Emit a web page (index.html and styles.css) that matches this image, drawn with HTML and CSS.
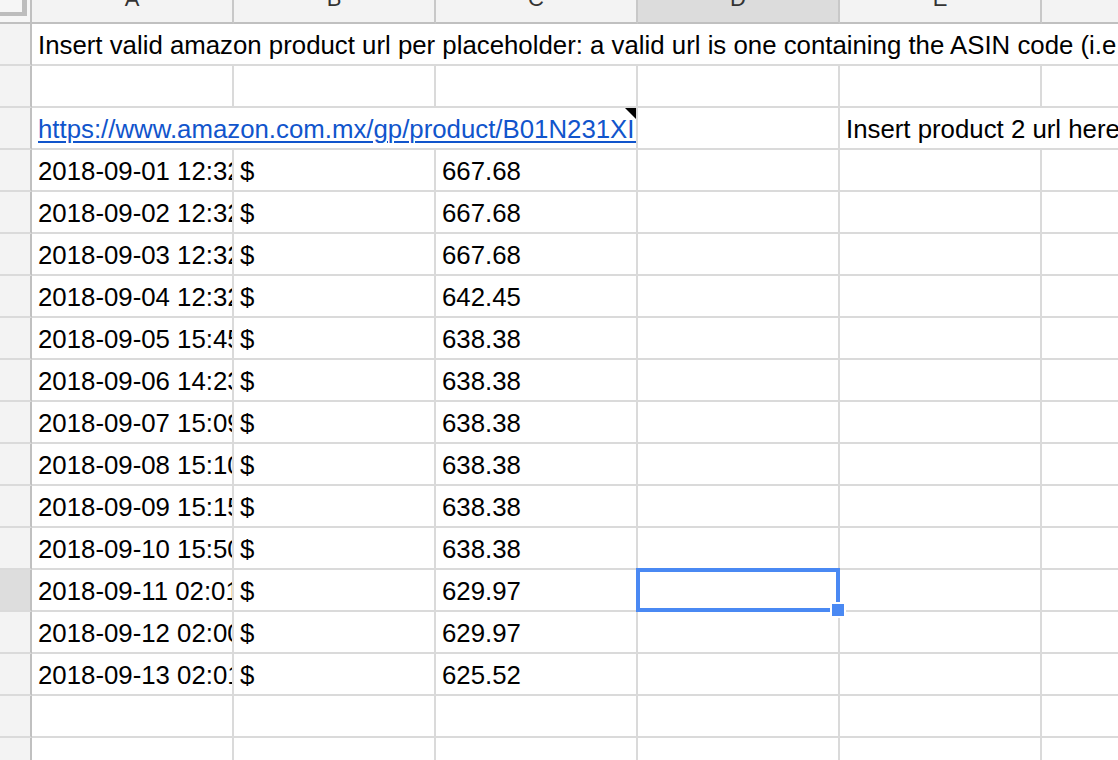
FILE: index.html
```html
<!DOCTYPE html>
<html>
<head>
<meta charset="utf-8">
<link rel="stylesheet" href="styles.css">
</head>
<body>
<div class="sheet">
  <div class="row hdr">
    <div class="rh corner"><div class="freeze"></div></div>
    <div class="ch"><span>A</span></div>
    <div class="ch"><span>B</span></div>
    <div class="ch"><span>C</span></div>
    <div class="ch on"><span>D</span></div>
    <div class="ch"><span>E</span></div>
    <div class="ch"><span>F</span></div>
  </div>

  <div class="row">
    <div class="rh"></div>
    <div class="cell nob spill">Insert valid amazon product url per placeholder: a valid url is one containing the ASIN code (i.e. B01N231XIL)<i class="note"></i></div>
    <div class="cell nob"></div>
    <div class="cell nob"></div>
    <div class="cell nob"></div>
    <div class="cell nob"></div>
    <div class="cell nob"></div>
  </div>

  <div class="row">
    <div class="rh"></div>
    <div class="cell"></div><div class="cell"></div><div class="cell"></div><div class="cell"></div><div class="cell"></div><div class="cell"></div>
  </div>

  <div class="row">
    <div class="rh"></div>
    <div class="cell span3"><a class="link" href="#">https://www.amazon.com.mx/gp/product/B01N231XIL/ref=ox_sc_act_title_1</a><i class="note"></i></div>
    <div class="cell"></div>
    <div class="cell nob spill">Insert product 2 url here</div>
    <div class="cell"></div>
  </div>

  <div class="row"><div class="rh"></div><div class="cell date">2018-09-01 12:32:05</div><div class="cell">$</div><div class="cell">667.68</div><div class="cell"></div><div class="cell"></div><div class="cell"></div></div>
  <div class="row"><div class="rh"></div><div class="cell date">2018-09-02 12:32:11</div><div class="cell">$</div><div class="cell">667.68</div><div class="cell"></div><div class="cell"></div><div class="cell"></div></div>
  <div class="row"><div class="rh"></div><div class="cell date">2018-09-03 12:32:08</div><div class="cell">$</div><div class="cell">667.68</div><div class="cell"></div><div class="cell"></div><div class="cell"></div></div>
  <div class="row"><div class="rh"></div><div class="cell date">2018-09-04 12:32:14</div><div class="cell">$</div><div class="cell">642.45</div><div class="cell"></div><div class="cell"></div><div class="cell"></div></div>
  <div class="row"><div class="rh"></div><div class="cell date">2018-09-05 15:45:02</div><div class="cell">$</div><div class="cell">638.38</div><div class="cell"></div><div class="cell"></div><div class="cell"></div></div>
  <div class="row"><div class="rh"></div><div class="cell date">2018-09-06 14:23:40</div><div class="cell">$</div><div class="cell">638.38</div><div class="cell"></div><div class="cell"></div><div class="cell"></div></div>
  <div class="row"><div class="rh"></div><div class="cell date">2018-09-07 15:09:31</div><div class="cell">$</div><div class="cell">638.38</div><div class="cell"></div><div class="cell"></div><div class="cell"></div></div>
  <div class="row"><div class="rh"></div><div class="cell date">2018-09-08 15:10:22</div><div class="cell">$</div><div class="cell">638.38</div><div class="cell"></div><div class="cell"></div><div class="cell"></div></div>
  <div class="row"><div class="rh"></div><div class="cell date">2018-09-09 15:15:47</div><div class="cell">$</div><div class="cell">638.38</div><div class="cell"></div><div class="cell"></div><div class="cell"></div></div>
  <div class="row"><div class="rh"></div><div class="cell date">2018-09-10 15:50:13</div><div class="cell">$</div><div class="cell">638.38</div><div class="cell"></div><div class="cell"></div><div class="cell"></div></div>
  <div class="row"><div class="rh on"></div><div class="cell date">2018-09-11 02:01:09</div><div class="cell">$</div><div class="cell">629.97</div><div class="cell selected"><div class="selbox"><i class="handle"></i></div></div><div class="cell"></div><div class="cell"></div></div>
  <div class="row"><div class="rh"></div><div class="cell date">2018-09-12 02:00:58</div><div class="cell">$</div><div class="cell">629.97</div><div class="cell"></div><div class="cell"></div><div class="cell"></div></div>
  <div class="row"><div class="rh"></div><div class="cell date">2018-09-13 02:01:12</div><div class="cell">$</div><div class="cell">625.52</div><div class="cell"></div><div class="cell"></div><div class="cell"></div></div>

  <div class="row"><div class="rh"></div><div class="cell"></div><div class="cell"></div><div class="cell"></div><div class="cell"></div><div class="cell"></div><div class="cell"></div></div>
  <div class="row"><div class="rh"></div><div class="cell"></div><div class="cell"></div><div class="cell"></div><div class="cell"></div><div class="cell"></div><div class="cell"></div></div>
</div>
</body>
</html>
```

FILE: styles.css
```css
* { box-sizing: border-box; }

html, body {
  margin: 0;
  padding: 0;
  width: 1118px;
  height: 760px;
  overflow: hidden;
  background: #ffffff;
}

.sheet {
  font-family: "Liberation Sans", Arial, sans-serif;
  font-size: 25.8px;
  color: #000000;
  width: 1400px;
}

.row {
  display: flex;
  height: 42px;
  background: #ffffff;
}

.row.hdr {
  height: 24px;
  background: #f3f3f3;
}

.rh {
  flex: 0 0 32px;
  height: 42px;
  background: #f3f3f3;
  border-right: 2px solid #c0c0c0;
  border-bottom: 2px solid #dadada;
}

.rh.on {
  background: #dddddd;
}

.rh.corner {
  height: 24px;
  border-bottom: 2px solid #c0c0c0;
  background: #f6f6f6;
}

.freeze {
  width: 27px;
  height: 16px;
  border-right: 5px solid #bdbdbd;
  border-bottom: 4px solid #bdbdbd;
}

.ch {
  flex: 0 0 202px;
  height: 24px;
  border-right: 2px solid #c8c8c8;
  border-bottom: 2px solid #c0c0c0;
  background: #f3f3f3;
  overflow: hidden;
  display: flex;
  align-items: flex-end;
  justify-content: center;
  padding-bottom: 14px;
  color: #333333;
  font-size: 22px;
}

.ch span {
  line-height: 18px;
}

.ch.on {
  background: #dcdcdc;
}

.cell {
  position: relative;
  flex: 0 0 202px;
  height: 42px;
  padding: 1px 6px 0;
  border-right: 2px solid #dadada;
  border-bottom: 2px solid #dadada;
  line-height: 41px;
  white-space: nowrap;
  overflow: hidden;
}

.cell.nob {
  border-right-color: transparent;
}

.cell.spill {
  overflow: visible;
  z-index: 1;
}

.cell.span3 {
  flex: 0 0 606px;
}

.link {
  color: #1155cc;
  text-decoration: underline;
  text-decoration-thickness: 2px;
  text-underline-offset: 3px;
}

.note {
  position: absolute;
  top: 0;
  right: 0;
  width: 0;
  height: 0;
  border-top: 11px solid #000000;
  border-left: 11px solid transparent;
}

.cell.selected {
  overflow: visible;
  z-index: 2;
}

.selbox {
  position: absolute;
  top: -2px;
  left: -2px;
  right: -2px;
  bottom: -2px;
  border: 4px solid #4a89f3;
}

.handle {
  position: absolute;
  right: -10px;
  bottom: -10px;
  width: 16px;
  height: 16px;
  background: #4a89f3;
  border: 2px solid #ffffff;
}
```
